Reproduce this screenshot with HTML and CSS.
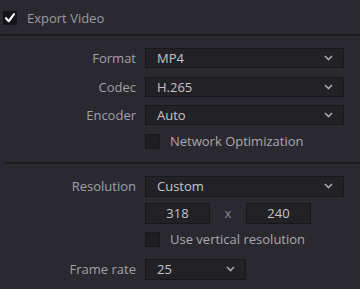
FILE: index.html
```html
<!DOCTYPE html>
<html>
<head>
<meta charset="utf-8">
<link rel="stylesheet" href="styles.css">
</head>
<body>
<div class="panel">
  <div class="header">
    <span class="cb checked">
      <svg width="14" height="14" viewBox="0 0 14 14"><path d="M3 7.2 L5.8 10.2 L11 3.2" fill="none" stroke="#fff" stroke-width="2.2" stroke-linecap="round" stroke-linejoin="round"/></svg>
    </span>
    <span class="title">Export Video</span>
  </div>
  <div class="section s1">
    <div class="grid g1">
      <div class="label">Format</div>
      <div class="select"><span>MP4</span><svg class="chev" width="9" height="6" viewBox="0 0 9 6"><path d="M1 1 L4.5 4.5 L8 1" fill="none" stroke="#a8a8a8" stroke-width="1.6"/></svg></div>
      <div class="label">Codec</div>
      <div class="select"><span>H.265</span><svg class="chev" width="9" height="6" viewBox="0 0 9 6"><path d="M1 1 L4.5 4.5 L8 1" fill="none" stroke="#a8a8a8" stroke-width="1.6"/></svg></div>
      <div class="label">Encoder</div>
      <div class="select"><span>Auto</span><svg class="chev" width="9" height="6" viewBox="0 0 9 6"><path d="M1 1 L4.5 4.5 L8 1" fill="none" stroke="#a8a8a8" stroke-width="1.6"/></svg></div>
      <div></div>
      <div class="check-row"><span class="cb"></span><span class="cb-text">Network Optimization</span></div>
    </div>
  </div>
  <div class="sep"></div>
  <div class="section s2">
    <div class="grid g2">
      <div class="label">Resolution</div>
      <div class="select tall"><span>Custom</span><svg class="chev" width="9" height="6" viewBox="0 0 9 6"><path d="M1 1 L4.5 4.5 L8 1" fill="none" stroke="#a8a8a8" stroke-width="1.6"/></svg></div>
      <div></div>
      <div class="dims"><div class="num">318</div><span class="x">x</span><div class="num">240</div></div>
      <div></div>
      <div class="check-row top"><span class="cb"></span><span class="cb-text">Use vertical resolution</span></div>
      <div class="label">Frame rate</div>
      <div class="select tall short"><span>25</span><svg class="chev" width="9" height="6" viewBox="0 0 9 6"><path d="M1 1 L4.5 4.5 L8 1" fill="none" stroke="#a8a8a8" stroke-width="1.6"/></svg></div>
    </div>
  </div>
</div>
</body>
</html>
```
FILE: styles.css
```css
html, body {
  margin: 0;
  padding: 0;
  background: #2a2930;
  font-family: "Open Sans", "Noto Sans", sans-serif;
  font-size: 13px;
  width: 360px;
  height: 289px;
  overflow: hidden;
}
.panel {
  display: flex;
  flex-direction: column;
}
.header {
  display: flex;
  align-items: center;
  padding-left: 3px;
  gap: 10px;
  border-bottom: 2px solid #1c1b20;
  box-sizing: border-box;
  height: 36px;
  padding-top: 2px;
}
.title {
  color: #9d9ca0;
}
.cb {
  width: 15px;
  height: 15px;
  box-sizing: border-box;
  background: #1e1d22;
  border: 1px solid #19181c;
  display: inline-flex;
  align-items: center;
  justify-content: center;
  flex: none;
}
.cb.checked {
  width: 14px;
  height: 14px;
  background: #141317;
  border: none;
}
.section.s1 {
  padding-top: 12px;
  padding-bottom: 13px;
}
.grid {
  display: grid;
  grid-template-columns: 136px 199px;
  column-gap: 9px;
  align-items: center;
}
.g1 {
  grid-template-rows: 20px 20px 20px 15px;
  row-gap: 8.5px;
}
.label {
  text-align: right;
  color: #a2a1a6;
  line-height: 20px;
}
.select {
  height: 20px;
  box-sizing: border-box;
  background: #222126;
  border: 1px solid #18171b;
  display: flex;
  align-items: center;
  justify-content: space-between;
  padding: 0 10px 0 11px;
  color: #c6c5ca;
}
.select.tall {
  height: 21px;
}
.select.short {
  width: 101px;
}
.chev {
  display: block;
}
.check-row {
  display: flex;
  align-items: center;
  gap: 10px;
  height: 15px;
}
.check-row.top {
  align-self: start;
  margin-top: 2px;
}
.cb-text {
  color: #a9a8ad;
}
.sep {
  height: 2px;
  background: #1c1b20;
  margin-left: 4px;
}
.section.s2 {
  padding-top: 12px;
}
.g2 {
  grid-template-rows: 21px 21px 23px 21px;
  row-gap: 6px;
}
.dims {
  display: flex;
  align-items: center;
}
.num {
  width: 65px;
  height: 21px;
  box-sizing: border-box;
  background: #222126;
  border: 1px solid #18171b;
  color: #c6c5ca;
  text-align: center;
  line-height: 19px;
}
.x {
  width: 36px;
  text-align: center;
  color: #8e8d92;
}
```
